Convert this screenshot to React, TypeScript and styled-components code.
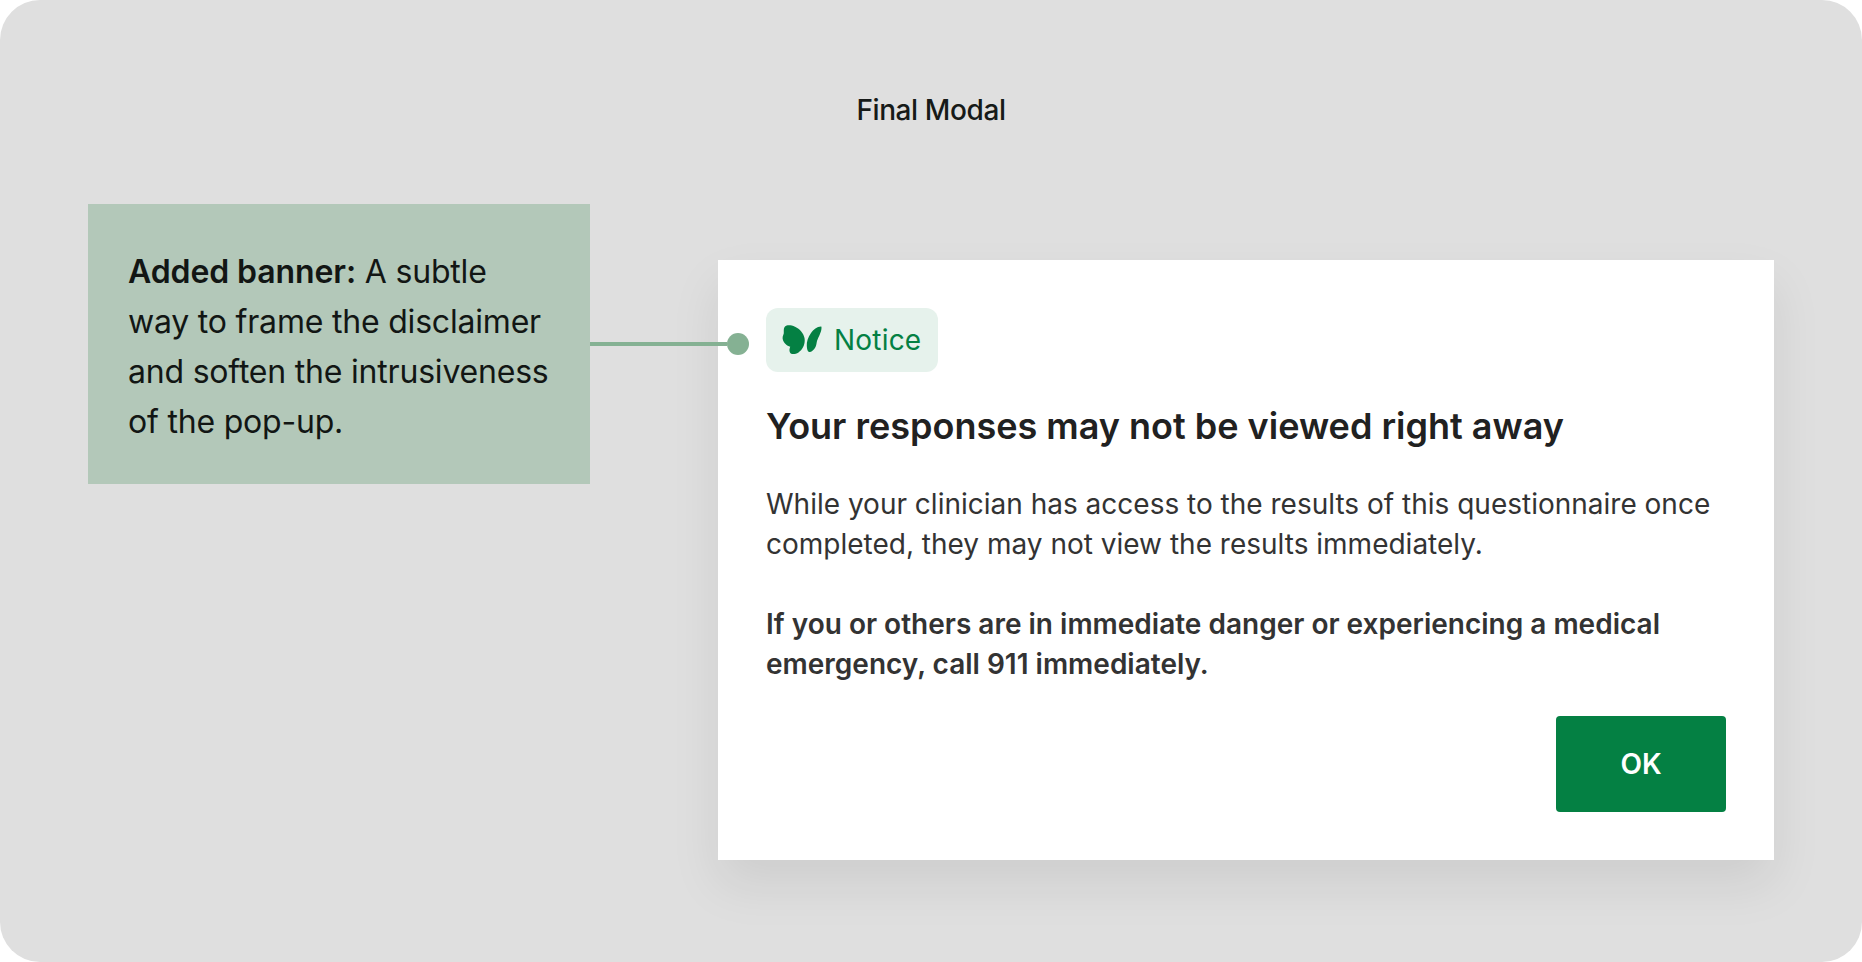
import React from 'react'
import styled, { createGlobalStyle } from 'styled-components'

const GlobalStyle = createGlobalStyle`
	html, body {
		margin: 0;
		background: #ffffff;
	}
	* {
		box-sizing: border-box;
	}
`

const Canvas = styled.main`
	width: 1862px;
	height: 962px;
	padding-top: 93px;
	background: #dfdfdf;
	border-radius: 40px;
	font-family: Inter, 'Liberation Sans', sans-serif;
	overflow: hidden;
`

const FrameTitle = styled.h1`
	margin: 0 0 77px;
	height: 34px;
	font-size: 28px;
	line-height: 34px;
	font-weight: 500;
	letter-spacing: -0.4px;
	text-align: center;
	color: #161a18;
`

const Stage = styled.section`
	display: flex;
	align-items: flex-start;
	padding-left: 88px;
`

const Annotation = styled.aside`
	width: 502px;
	height: 280px;
	padding: 43px 36px 0 40px;
	background: #b3c8b9;
	font-size: 32px;
	line-height: 50px;
	font-weight: 400;
	letter-spacing: -0.2px;
	color: #121614;

	strong {
		font-weight: 600;
		letter-spacing: -0.1px;
	}
`

const Connector = styled.div`
	position: relative;
	flex: none;
	width: 137px;
	height: 4px;
	margin: 138px -9px 0 0;
	background: #85b193;
	z-index: 1;

	&:after {
		content: '';
		position: absolute;
		top: -9px;
		right: -22px;
		width: 22px;
		height: 22px;
		border-radius: 50%;
		background: #85b193;
	}
`

const Modal = styled.article`
	width: 1056px;
	height: 600px;
	margin-top: 56px;
	padding: 48px;
	background: #ffffff;
	box-shadow: 0 24px 48px rgba(0, 0, 0, 0.08);
	display: flex;
	flex-direction: column;
	align-items: flex-start;
`

const Badge = styled.div`
	display: flex;
	align-items: center;
	gap: 12px;
	width: 172px;
	height: 64px;
	padding-left: 16px;
	background: #e6f2ec;
	border-radius: 12px;
	font-size: 28px;
	letter-spacing: 0.2px;
	color: #048043;
`

const ModalTitle = styled.h2`
	margin: 32px 0 0;
	font-size: 36px;
	line-height: 44px;
	font-weight: 600;
	color: #212121;
`

const Body = styled.p<{ $bold?: boolean }>`
	margin: ${(props) => (props.$bold ? '40px' : '36px')} 0 0;
	font-size: 28px;
	line-height: 40px;
	font-weight: ${(props) => (props.$bold ? 600 : 400)};
	color: #333333;
`

const Actions = styled.div`
	display: flex;
	justify-content: flex-end;
	width: 100%;
	margin-top: auto;
`

const OkButton = styled.button`
	width: 170px;
	height: 96px;
	border: 0;
	border-radius: 4px;
	background: #048043;
	color: #ffffff;
	font-family: inherit;
	font-size: 28px;
	font-weight: 600;
`

const Butterfly = () => (
	<svg width="40" height="30" viewBox="0 0 40 30" fill="#048043" aria-hidden="true">
		<path d="M3 1.5C5 -0.3 9 0 13 1.7C18 4 21.5 8 22.5 13C23.5 19 21 24.5 16.5 27.5C13 29.5 9 29.5 8 27.5C7 25.5 7.5 23.5 8.2 21.7C5 21 1.5 18 0.7 14C0.3 11.5 1.5 10 1.8 8.3C1.8 6 1.5 3 3 1.5Z" />
		<path d="M39 1.5C35 1.5 31.5 4.5 29 8C26 12 24.5 17 24.8 21C25 24 25.5 26.5 27 27C29 27.5 32 25 33.5 22C34.5 20 34.5 18 35 16C36.5 12 39.5 7 39.5 3C39.5 2 39.5 1.5 39 1.5Z" />
	</svg>
)

export default function App() {
	return (
		<>
			<GlobalStyle />
			<Canvas>
				<FrameTitle>Final Modal</FrameTitle>
				<Stage>
					<Annotation>
						<strong>Added banner:</strong> A subtle way to frame the disclaimer and soften the intrusiveness of the pop-up.
					</Annotation>
					<Connector />
					<Modal>
						<Badge>
							<Butterfly />
							Notice
						</Badge>
						<ModalTitle>Your responses may not be viewed right away</ModalTitle>
						<Body>
							While your clinician has access to the results of this questionnaire once completed, they may not view the results immediately.
						</Body>
						<Body $bold>
							If you or others are in immediate danger or experiencing a medical emergency, call 911 immediately.
						</Body>
						<Actions>
							<OkButton>OK</OkButton>
						</Actions>
					</Modal>
				</Stage>
			</Canvas>
		</>
	)
}
